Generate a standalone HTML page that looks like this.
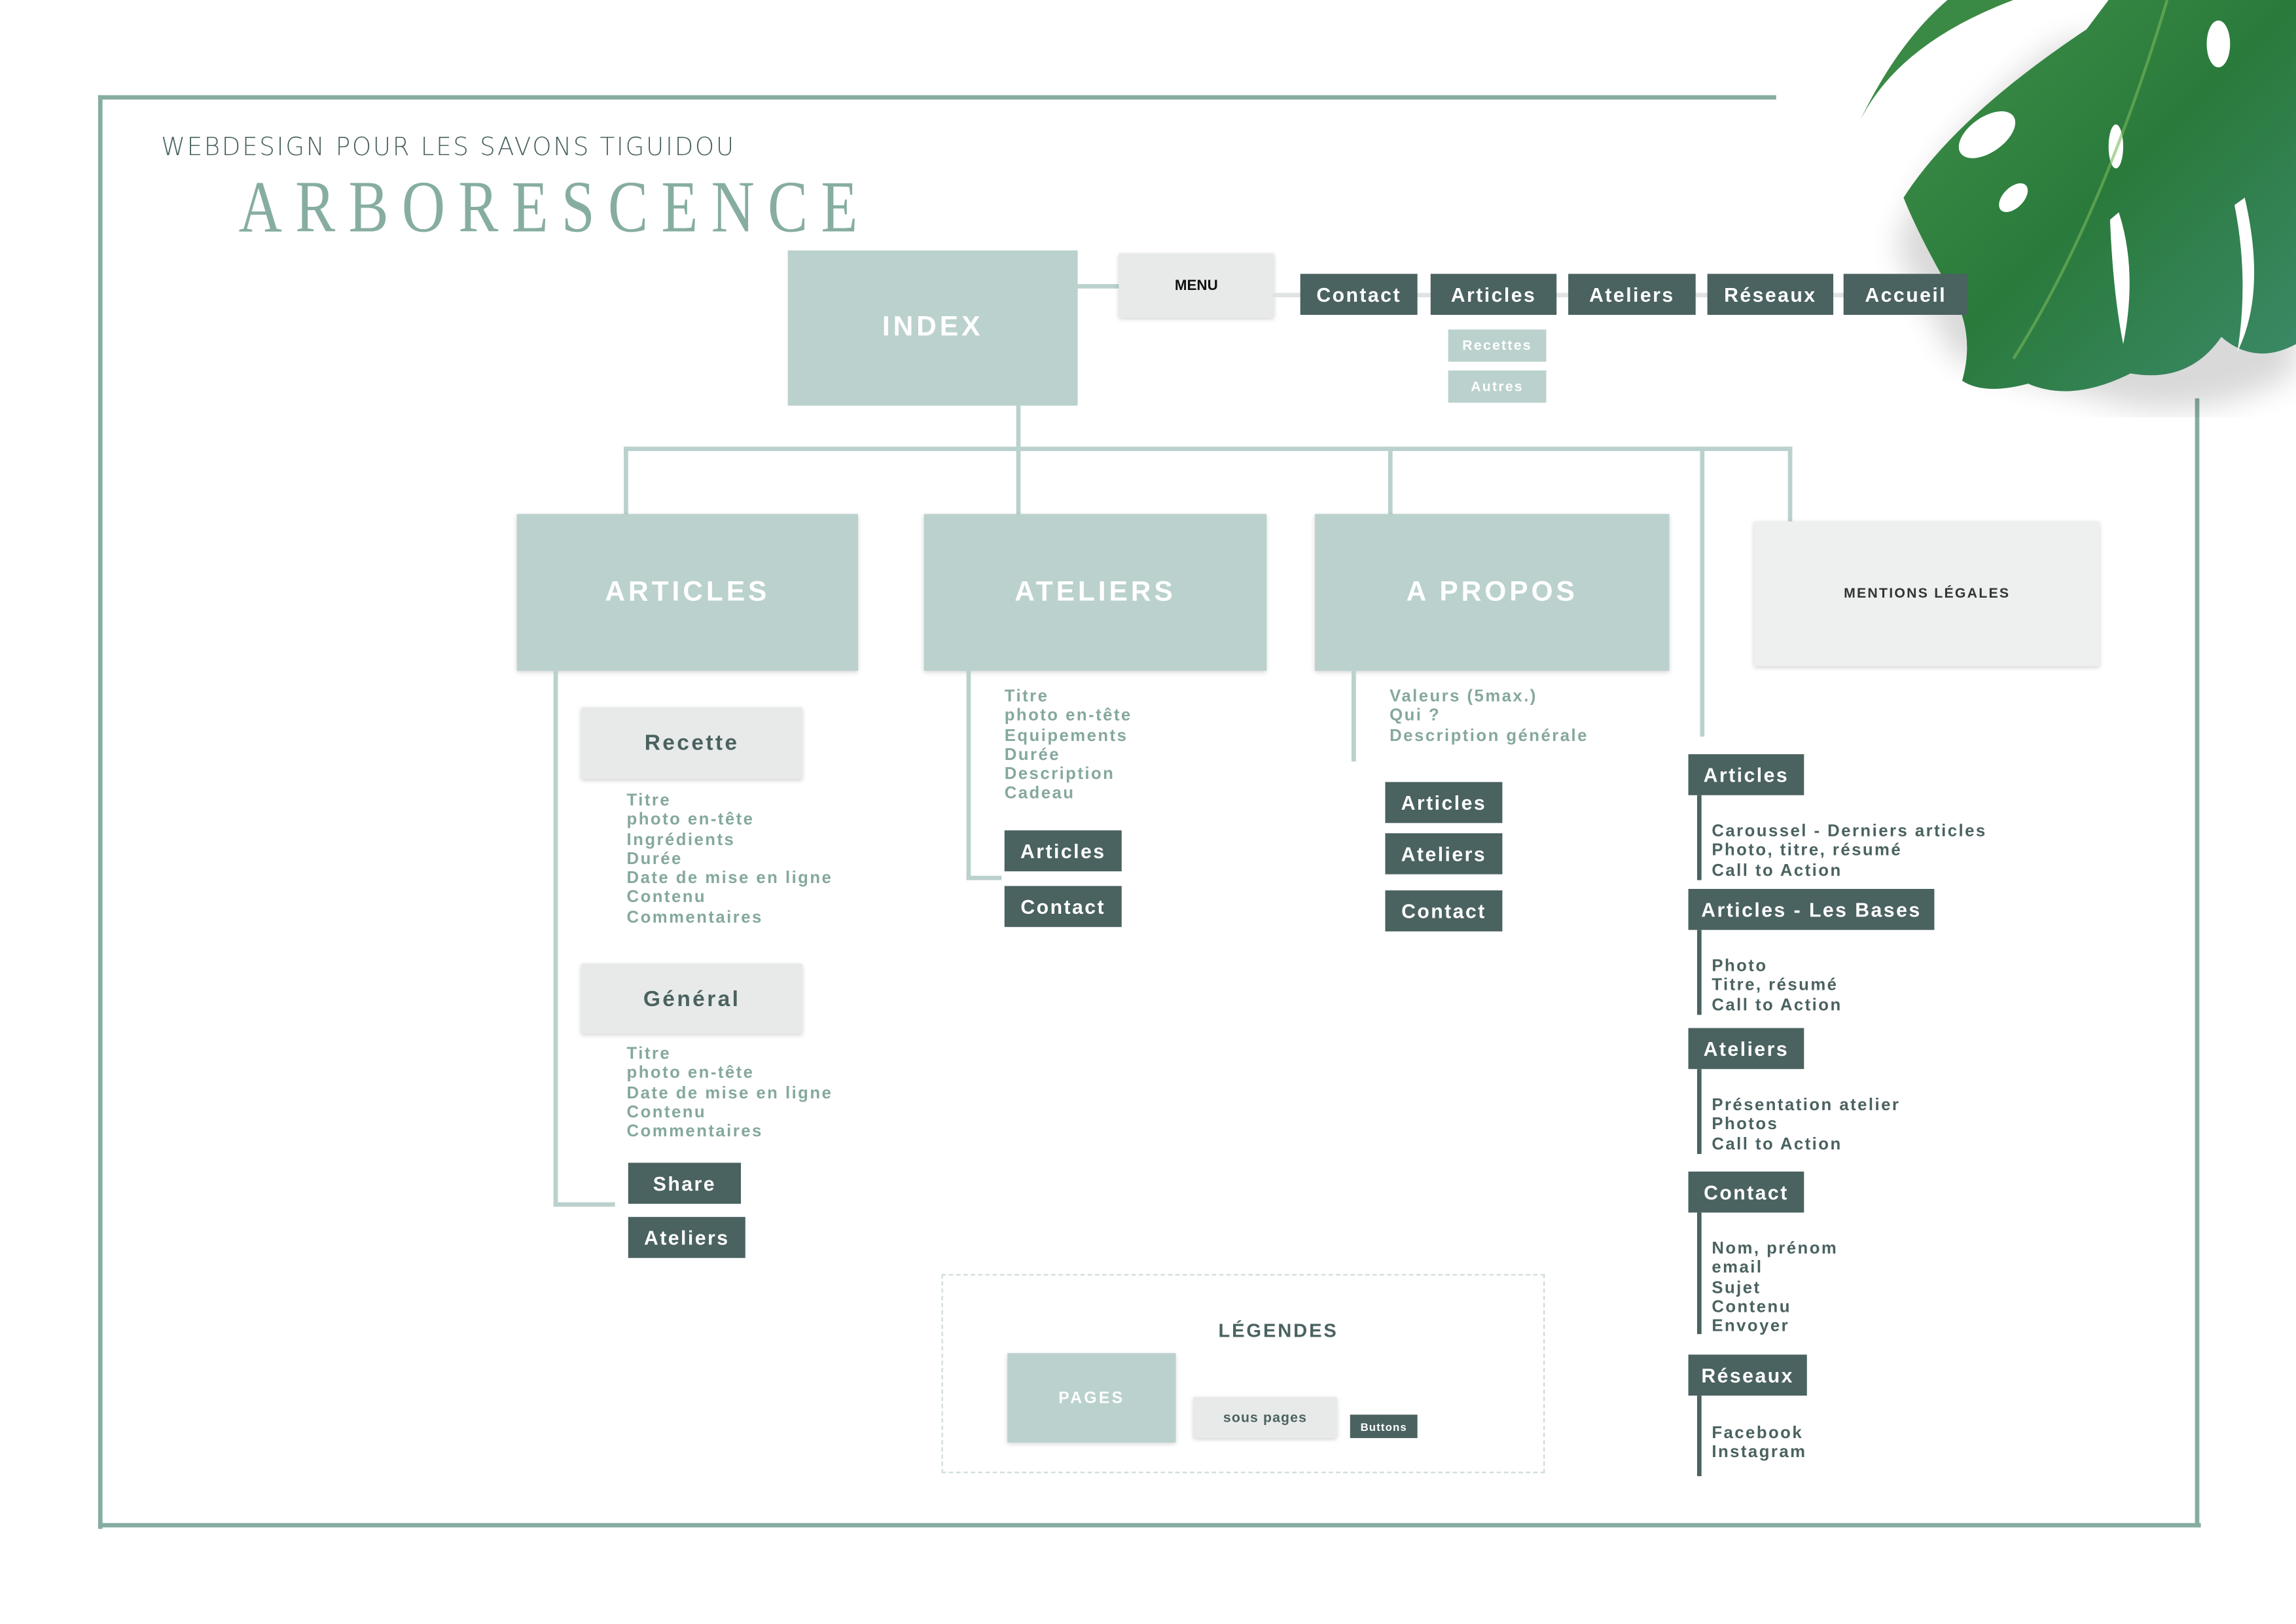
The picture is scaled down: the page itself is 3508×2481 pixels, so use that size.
<!DOCTYPE html>
<html><head><meta charset="utf-8"><style>
html,body{margin:0;padding:0;background:#fff;overflow:hidden}
body{width:3508px;height:2480px}
#w{position:absolute;left:0;top:0;width:1568px;height:1109px;transform:scale(2.23724);transform-origin:0 0;font-family:"Liberation Sans","DejaVu Sans",sans-serif}
#w div{position:absolute;box-sizing:border-box}
.ln{background:#bad1cd}
.fr{background:#87ada2}
.dk{background:#4a6260}
.pg{background:#bad1cd;color:#fff;font-weight:bold;letter-spacing:2.2px;display:flex;align-items:center;justify-content:center;font-size:19px;box-shadow:0 1px 3px rgba(0,0,0,.18)}
.sp{background:#e8eaea;color:#4a6260;font-weight:bold;display:flex;align-items:center;justify-content:center;box-shadow:0 1px 3px rgba(0,0,0,.2)}
.bt{background:#4a6260;color:#fff;font-weight:bold;font-size:13.5px;letter-spacing:1.1px;display:flex;align-items:center;justify-content:center;height:28px}
.rb{background:#bad1cd;color:#fff;font-weight:bold;font-size:9.5px;letter-spacing:1px;display:flex;align-items:center;justify-content:center;height:22px;width:67px;left:989px}
.li{color:#85a89e;font-weight:bold;font-size:11.5px;line-height:13.3px;letter-spacing:1.1px;white-space:nowrap}
.ld{color:#4a6260}
</style></head><body><div id="w">
<div class="fr" style="left:67px;top:65px;width:1146px;height:3px"></div>
<div class="fr" style="left:67px;top:65px;width:3px;height:979px"></div>
<div class="fr" style="left:67px;top:1040px;width:1436px;height:3px"></div>
<div class="fr" style="left:1499px;top:272px;width:3px;height:771px"></div>

<div style="left:110px;top:91px;font-size:17px;color:#4a6260;letter-spacing:1.2px;white-space:nowrap;font-family:'DejaVu Sans',sans-serif;font-weight:200;transform:scaleX(0.98);transform-origin:0 0">WEBDESIGN POUR LES SAVONS TIGUIDOU</div>
<div style="left:163px;top:112px;font-family:'Liberation Serif',serif;font-size:50px;color:#87ada2;letter-spacing:11px;white-space:nowrap;transform:scaleX(0.82);transform-origin:0 0">ARBORESCENCE</div>

<svg style="position:absolute;left:1255px;top:0" width="313" height="285" viewBox="0 0 313 285">
<defs><linearGradient id="g" x1="0" y1="0" x2="1" y2="1"><stop offset="0" stop-color="#3f9148"/><stop offset=".5" stop-color="#2a7a3c"/><stop offset="1" stop-color="#3c8a6a"/></linearGradient>
<filter id="s" x="-20%" y="-20%" width="140%" height="140%"><feGaussianBlur stdDeviation="10"/></filter></defs>
<path d="M40 170 Q60 100 150 30 L313 0 L313 255 Q240 295 170 270 Q110 255 80 245 Z" fill="#000" opacity=".15" filter="url(#s)"/>
<path d="M14 85 Q40 30 120 0 L75 0 Q40 30 14 85Z" fill="#3a8a45"/>
<path d="M45 135 Q80 80 170 20 L185 0 L313 0 L313 235 Q285 250 262 230 Q240 262 200 255 Q160 275 130 262 Q100 270 85 260 Q95 225 75 195 Q55 160 45 135 Z" fill="url(#g)"/>
<ellipse cx="102" cy="92" rx="22" ry="12" transform="rotate(-35 102 92)" fill="#fff"/>
<ellipse cx="120" cy="135" rx="12" ry="7" transform="rotate(-45 120 135)" fill="#fff"/>
<ellipse cx="190" cy="100" rx="5" ry="15" fill="#fff"/>
<path d="M192 145 Q205 185 195 235 Q188 200 186 150Z" fill="#fff"/>
<path d="M278 135 Q293 200 273 240 Q281 190 271 140Z" fill="#fff"/>
<ellipse cx="260" cy="30" rx="8" ry="16" fill="#fff"/>
<path d="M120 245 Q180 150 225 0" stroke="#7ab85a" stroke-width="2" fill="none" opacity=".6"/>
</svg>

<div class="pg" style="left:538px;top:171px;width:198px;height:106px;box-shadow:none">INDEX</div>
<div class="ln" style="left:735px;top:194px;width:30px;height:3px"></div>
<div class="sp" style="left:764px;top:173px;width:106px;height:44px;font-size:10px;color:#111">MENU</div>
<div class="ln" style="left:869px;top:200px;width:400px;height:3px;background:#e0e3e3"></div>
<div class="bt" style="left:888px;top:187px;width:80px">Contact</div>
<div class="bt" style="left:977px;top:187px;width:86px">Articles</div>
<div class="bt" style="left:1071px;top:187px;width:87px">Ateliers</div>
<div class="bt" style="left:1166px;top:187px;width:86px">Réseaux</div>
<div class="bt" style="left:1259px;top:187px;width:85px">Accueil</div>
<div class="rb" style="top:225px">Recettes</div>
<div class="rb" style="top:253px">Autres</div>

<div class="ln" style="left:694px;top:277px;width:3px;height:75px"></div>
<div class="ln" style="left:426px;top:305px;width:798px;height:3px"></div>
<div class="ln" style="left:426px;top:305px;width:3px;height:47px"></div>
<div class="ln" style="left:948px;top:305px;width:3px;height:47px"></div>
<div class="ln" style="left:1161px;top:305px;width:3px;height:198px"></div>
<div class="ln" style="left:1221px;top:305px;width:3px;height:51px"></div>

<div class="pg" style="left:353px;top:351px;width:233px;height:107px">ARTICLES</div>
<div class="pg" style="left:631px;top:351px;width:234px;height:107px">ATELIERS</div>
<div class="pg" style="left:898px;top:351px;width:242px;height:107px">A PROPOS</div>
<div class="sp" style="left:1198px;top:356px;width:236px;height:99px;font-size:9.5px;letter-spacing:1px;color:#333;background:#eeefef">MENTIONS LÉGALES</div>

<div class="ln" style="left:378px;top:458px;width:3px;height:366px"></div>
<div class="ln" style="left:378px;top:821px;width:42px;height:3px"></div>
<div class="sp" style="left:397px;top:483px;width:151px;height:49px;font-size:15px;letter-spacing:1.5px">Recette</div>
<div class="li" style="left:428px;top:541px">Titre<br>photo en-tête<br>Ingrédients<br>Durée<br>Date de mise en ligne<br>Contenu<br>Commentaires</div>
<div class="sp" style="left:397px;top:658px;width:151px;height:48px;font-size:15px;letter-spacing:1.5px">Général</div>
<div class="li" style="left:428px;top:714px">Titre<br>photo en-tête<br>Date de mise en ligne<br>Contenu<br>Commentaires</div>
<div class="bt" style="left:429px;top:794px;width:77px">Share</div>
<div class="bt" style="left:429px;top:831px;width:80px">Ateliers</div>

<div class="ln" style="left:660px;top:458px;width:3px;height:143px"></div>
<div class="ln" style="left:660px;top:598px;width:24px;height:3px"></div>
<div class="li" style="left:686px;top:470px">Titre<br>photo en-tête<br>Equipements<br>Durée<br>Description<br>Cadeau</div>
<div class="bt" style="left:686px;top:567px;width:80px">Articles</div>
<div class="bt" style="left:686px;top:605px;width:80px">Contact</div>

<div class="ln" style="left:923px;top:458px;width:3px;height:62px"></div>
<div class="li" style="left:949px;top:470px">Valeurs (5max.)<br>Qui ?<br>Description générale</div>
<div class="bt" style="left:946px;top:534px;width:80px">Articles</div>
<div class="bt" style="left:946px;top:569px;width:80px">Ateliers</div>
<div class="bt" style="left:946px;top:608px;width:80px">Contact</div>

<div class="dk" style="left:1159px;top:543px;width:3px;height:58px"></div>
<div class="dk" style="left:1159px;top:635px;width:3px;height:58px"></div>
<div class="dk" style="left:1159px;top:730px;width:3px;height:58px"></div>
<div class="dk" style="left:1159px;top:828px;width:3px;height:83px"></div>
<div class="dk" style="left:1159px;top:953px;width:3px;height:55px"></div>
<div class="bt" style="left:1153px;top:515px;width:79px">Articles</div>
<div class="li ld" style="left:1169px;top:562px">Caroussel - Derniers articles<br>Photo, titre, résumé<br>Call to Action</div>
<div class="bt" style="left:1153px;top:607px;width:168px">Articles - Les Bases</div>
<div class="li ld" style="left:1169px;top:654px">Photo<br>Titre, résumé<br>Call to Action</div>
<div class="bt" style="left:1153px;top:702px;width:79px">Ateliers</div>
<div class="li ld" style="left:1169px;top:749px">Présentation atelier<br>Photos<br>Call to Action</div>
<div class="bt" style="left:1153px;top:800px;width:79px">Contact</div>
<div class="li ld" style="left:1169px;top:847px">Nom, prénom<br>email<br>Sujet<br>Contenu<br>Envoyer</div>
<div class="bt" style="left:1153px;top:925px;width:81px">Réseaux</div>
<div class="li ld" style="left:1169px;top:973px">Facebook<br>Instagram</div>

<div style="left:643px;top:870px;width:412px;height:136px;border:1.5px dashed #cfdcd9"></div>
<div style="left:643px;top:901px;width:460px;text-align:center;font-weight:bold;font-size:13px;letter-spacing:1.3px;color:#4a6260">LÉGENDES</div>
<div class="pg" style="left:688px;top:924px;width:115px;height:61px;font-size:11px;letter-spacing:1.5px">PAGES</div>
<div class="sp" style="left:815px;top:954px;width:98px;height:28px;font-size:9.5px;letter-spacing:.5px">sous pages</div>
<div class="bt" style="left:922px;top:966px;width:46px;height:16px;font-size:7.5px;letter-spacing:.5px">Buttons</div>
</div></body></html>
